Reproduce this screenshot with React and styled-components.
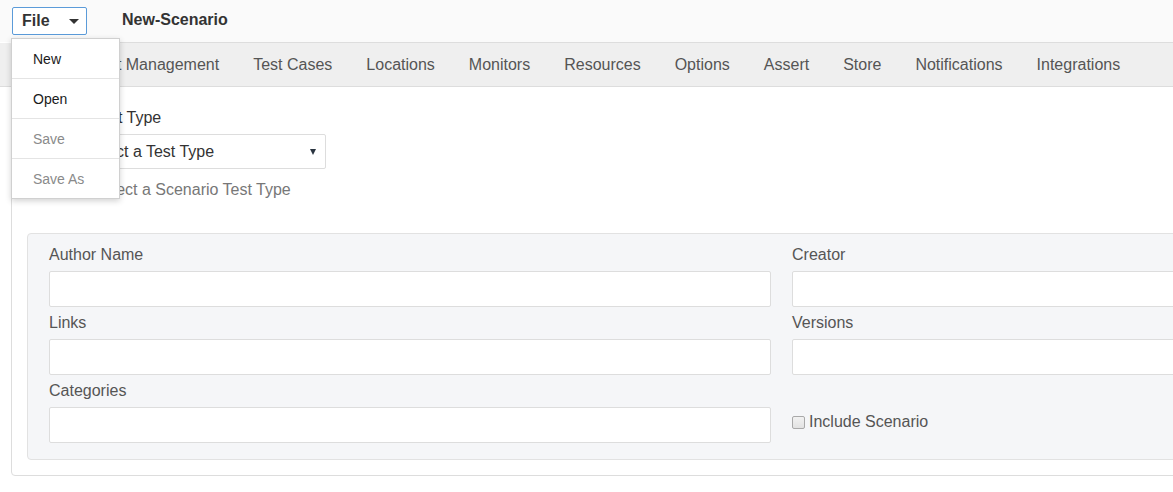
import React from "react"
import styled, { createGlobalStyle } from "styled-components"

const GlobalStyle = createGlobalStyle`
    html, body {
        margin: 0;
        padding: 0;
        overflow: hidden;
        background: #fff;
        font-family: "Liberation Sans", Arial, sans-serif;
    }
`

const tabs = ["Test Management", "Test Cases", "Locations", "Monitors", "Resources", "Options", "Assert", "Store", "Notifications", "Integrations"]

const menuItems = [
    { label: "New" },
    { label: "Open" },
    { label: "Save", disabled: true },
    { label: "Save As", disabled: true },
]

const fields = [
    { label: "Author Name" },
    { label: "Creator" },
    { label: "Links" },
    { label: "Versions" },
    { label: "Categories" },
]

const App = () => {
    return (
        <Page>
            <GlobalStyle />
            <TopBar>
                <FileWrap>
                    <FileButton>
                        File
                        <Caret />
                    </FileButton>
                    <Menu>
                        {menuItems.map((m) => (
                            <MenuItem key={m.label} $disabled={m.disabled}>{m.label}</MenuItem>
                        ))}
                    </Menu>
                </FileWrap>
                <Title>New-Scenario</Title>
            </TopBar>
            <Card>
                <TabNav>
                    {tabs.map((t) => (
                        <Tab key={t}>{t}</Tab>
                    ))}
                </TabNav>
                <CardBody>
                    <TypeGroup>
                        <TypeLabel>Test Type</TypeLabel>
                        <SelectBox>
                            <span>Select a Test Type</span>
                            <SmallCaret />
                        </SelectBox>
                        <HelpText>Select a Scenario Test Type</HelpText>
                    </TypeGroup>
                    <Panel>
                        {fields.map((f) => (
                            <Field key={f.label}>
                                <FieldLabel>{f.label}</FieldLabel>
                                <Input type="text" />
                            </Field>
                        ))}
                        <CheckRow>
                            <Check type="checkbox" />
                            <span>Include Scenario</span>
                        </CheckRow>
                    </Panel>
                </CardBody>
            </Card>
        </Page>
    )
}

const Page = styled.div`
    width: 1600px;
    min-height: 492px;
    color: #333;
`

const TopBar = styled.div`
    height: 42px;
    background: #fafafa;
    display: flex;
    align-items: center;
    padding-left: 12px;
`

const FileWrap = styled.div`
    position: relative;
    z-index: 5;
`

const FileButton = styled.div`
    box-sizing: border-box;
    width: 75px;
    height: 28px;
    border: 1px solid #5b9bd9;
    border-radius: 2px;
    background: #fff;
    display: flex;
    align-items: center;
    padding-left: 9px;
    font-size: 16px;
    font-weight: bold;
    color: #333;
`

const Caret = styled.span`
    margin-left: 19px;
    width: 0;
    height: 0;
    border-left: 5px solid transparent;
    border-right: 5px solid transparent;
    border-top: 5px solid #333;
`

const Menu = styled.div`
    position: absolute;
    top: 31px;
    left: -1px;
    width: 109px;
    box-sizing: border-box;
    background: #fff;
    border: 1px solid #d0d0d0;
    box-shadow: 0 2px 6px rgba(0, 0, 0, 0.18);
`

const MenuItem = styled.div`
    height: 40px;
    display: flex;
    align-items: center;
    padding-left: 21px;
    padding-top: 1px;
    font-size: 14px;
    color: ${(p) => (p.$disabled ? "#8a8a8a" : "#1a1a1a")};
    border-top: 1px solid #e4e4e4;
    box-sizing: border-box;

    &:first-child {
        border-top: none;
        height: 39px;
    }
`

const Title = styled.div`
    margin-left: 35px;
    margin-top: -2px;
    font-size: 16px;
    font-weight: bold;
    color: #333;
`

const Card = styled.div`
    margin-left: 11px;
    width: 1541px;
    border: 1px solid #ddd;
    border-radius: 4px;
    box-sizing: border-box;
`

const TabNav = styled.div`
    height: 44px;
    background: #efefef;
    border-bottom: 1px solid #ddd;
    box-sizing: border-box;
    display: flex;
    align-items: center;
    padding-left: 75px;
    margin-left: -12px;
    margin-right: -40px;
`

const Tab = styled.div`
    padding: 0 17px;
    font-size: 16px;
    color: #555;
    white-space: nowrap;
`

const CardBody = styled.div`
    padding: 20px 15px 15px;
`

const TypeGroup = styled.div`
    margin-left: 45px;
    display: flex;
    flex-direction: column;
    align-items: flex-start;
`

const TypeLabel = styled.div`
    font-size: 16px;
    line-height: 22px;
    color: #333;
    margin-left: 21px;
`

const SelectBox = styled.div`
    margin-top: 5px;
    width: 254px;
    height: 35px;
    box-sizing: border-box;
    border: 1px solid #ddd;
    border-radius: 2px;
    background: #fff;
    display: flex;
    align-items: center;
    justify-content: space-between;
    padding: 0 8px 0 11px;
    font-size: 16px;
    color: #333;
`

const SmallCaret = styled.span`
    width: 0;
    height: 0;
    border-left: 3px solid transparent;
    border-right: 3px solid transparent;
    border-top: 6px solid #2a3440;
    margin-right: 1px;
`

const HelpText = styled.div`
    margin-top: 10px;
    margin-left: 21px;
    font-size: 16px;
    line-height: 22px;
    color: #777;
`

const Panel = styled.div`
    margin-top: 32px;
    background: #f5f6f8;
    border: 1px solid #e2e2e2;
    border-radius: 4px;
    padding: 10px 21px 16px;
    display: grid;
    grid-template-columns: 722px 722px;
    column-gap: 21px;
    row-gap: 5px;
`

const Field = styled.div`
    display: flex;
    flex-direction: column;
`

const FieldLabel = styled.label`
    font-size: 16px;
    line-height: 22px;
    color: #555;
    margin-bottom: 5px;
`

const Input = styled.input`
    box-sizing: border-box;
    height: 36px;
    margin: 0;
    border: 1px solid #ddd;
    border-radius: 2px;
    background: #fff;
    outline: none;
    font-family: inherit;
    font-size: 16px;
`

const CheckRow = styled.label`
    align-self: end;
    height: 36px;
    padding-bottom: 6px;
    box-sizing: border-box;
    display: flex;
    align-items: center;
    gap: 4px;
    font-size: 16px;
    color: #555;
`

const Check = styled.input`
    appearance: none;
    margin: 0;
    width: 13px;
    height: 13px;
    border: 1px solid #a9a9a9;
    border-radius: 2px;
    background: linear-gradient(#f2f2f2, #e2e2e2);
    box-sizing: border-box;
`

export default App
